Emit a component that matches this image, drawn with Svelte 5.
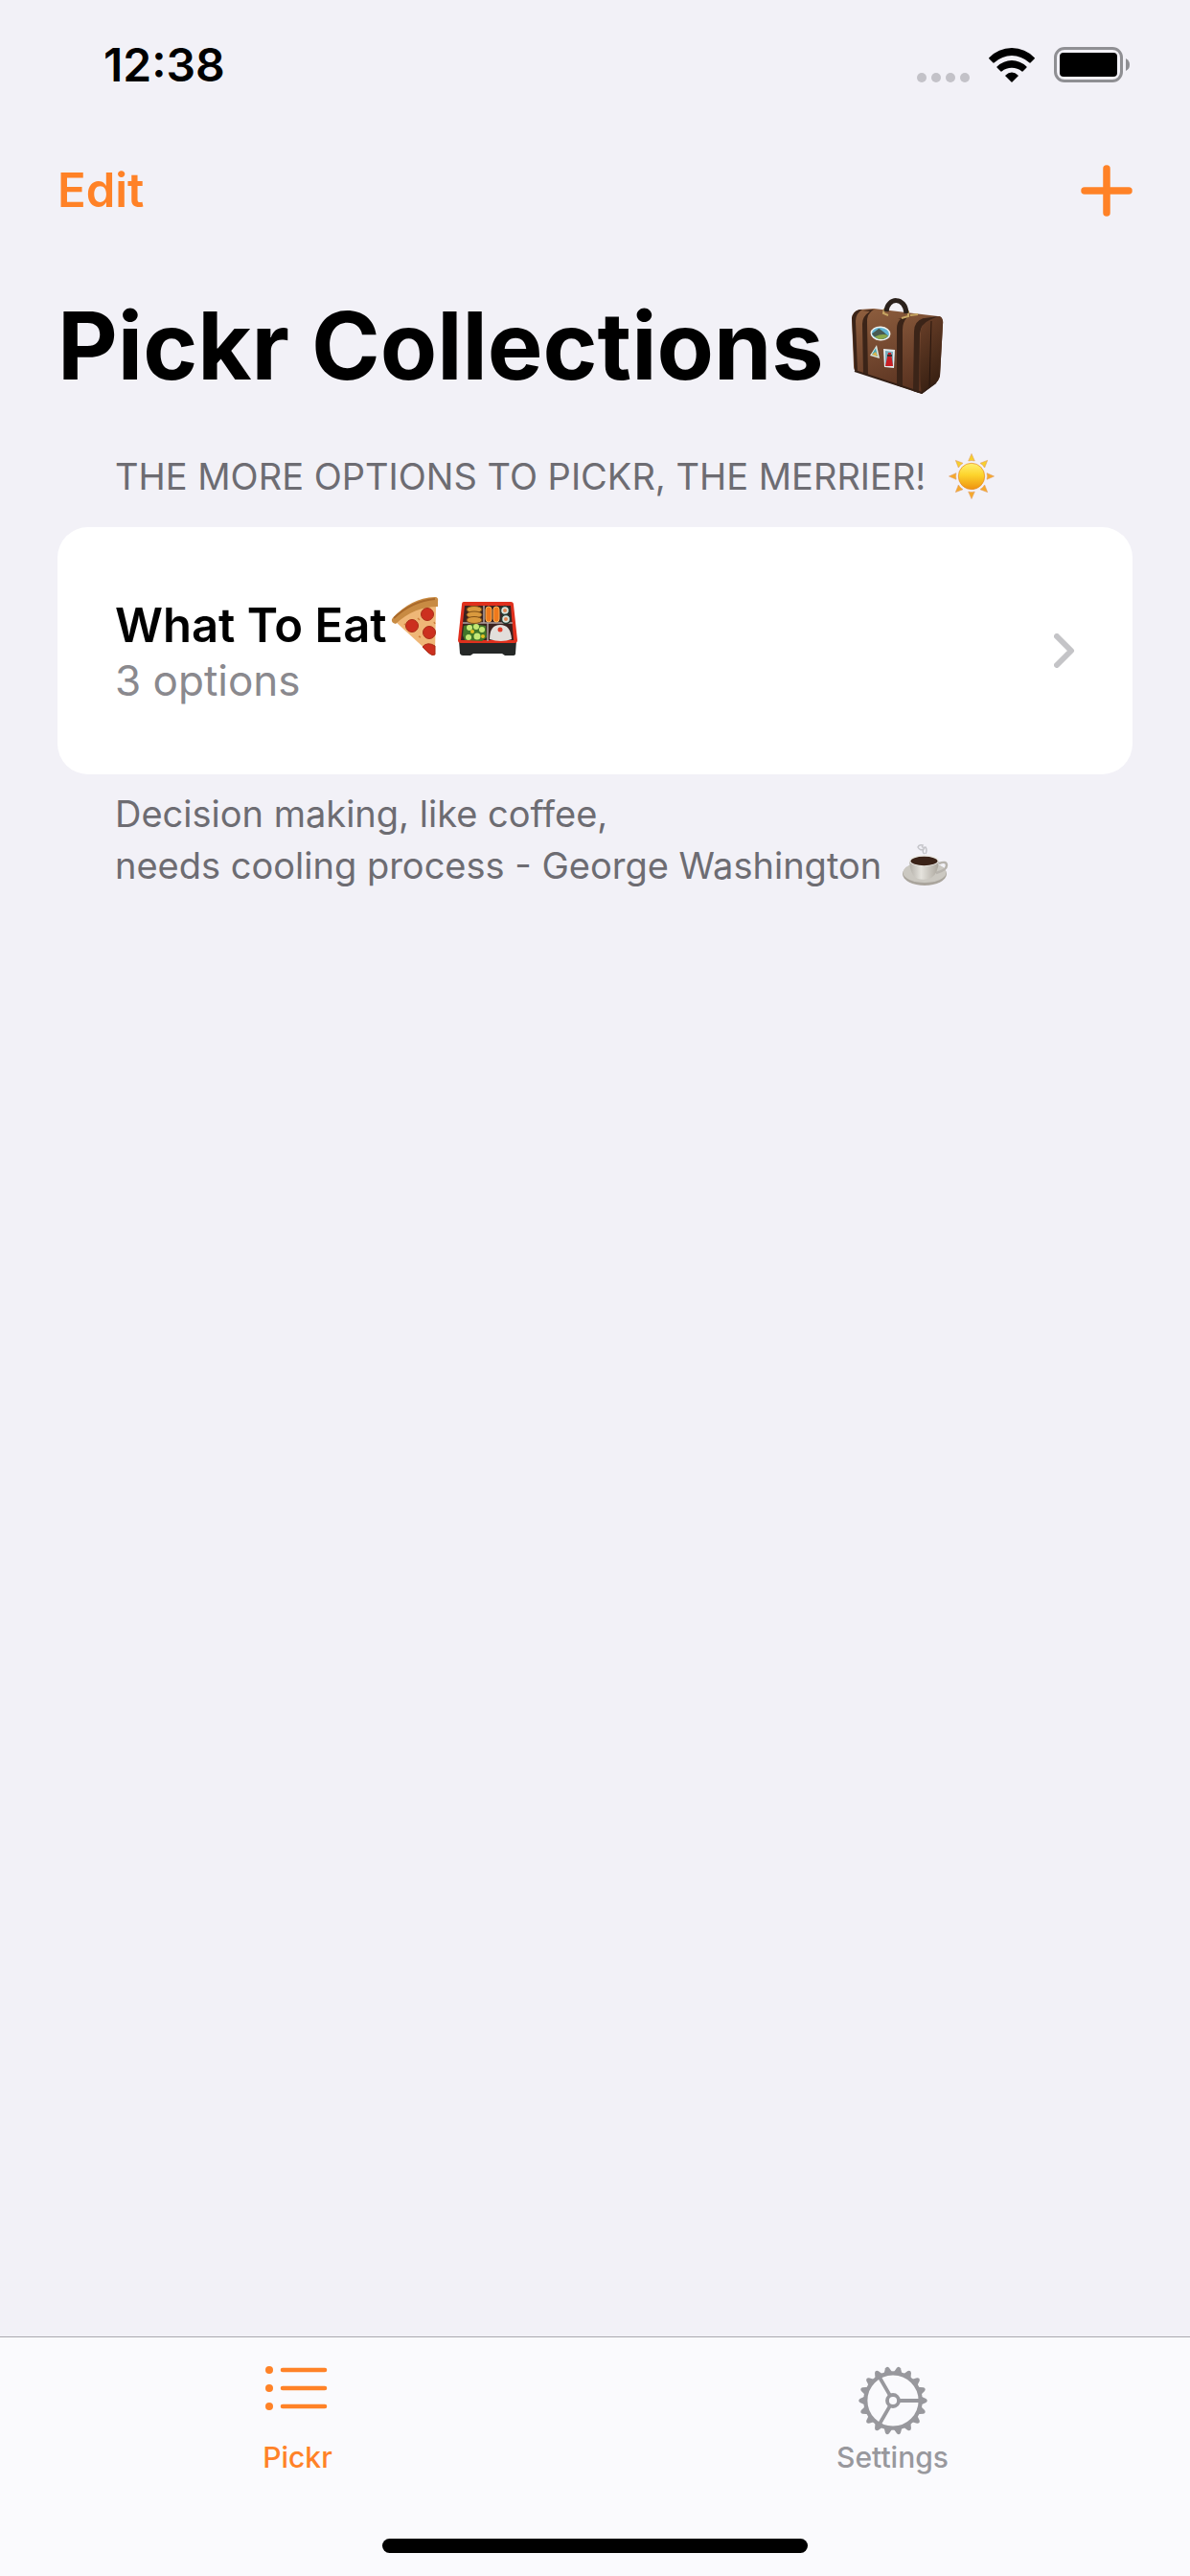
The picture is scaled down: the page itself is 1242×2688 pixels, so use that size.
<script>
  const teeth = Array.from({ length: 18 }, (_, i) => i * 20);
  const rays = Array.from({ length: 8 }, (_, i) => i * 45);
</script>

<div class="screen">
  <div class="status">
    <time>12:38</time>
    <div class="indicators">
      <svg class="dots" viewBox="0 0 55 10" aria-hidden="true">
        <g fill="#c3c2c8">
          <circle cx="5" cy="5" r="5" /><circle cx="20" cy="5" r="5" /><circle cx="35" cy="5" r="5" /><circle cx="50" cy="5" r="5" />
        </g>
      </svg>
      <svg class="wifi" viewBox="0 0 48 36" aria-hidden="true">
        <path d="M0 10.5Q10 0 24 0T48 10.5Q48 11 47.500 11.500L43.500 15.500Q43 15.800 42.500 15.500Q34 8 24 8T5.500 15.500Q5 15.800 4.500 15.500L.5 11.500Q0 11 0 10.500Z" />
        <path d="M8.500 19.500Q15.500 13 24 13T39.500 19.500Q39.800 20 39.500 20.500L35.500 24.500Q35 24.800 34.500 24.500Q30 20.800 24 20.800T13.500 24.500Q13 24.800 12.500 24.500L8.500 20.500Q8.200 20 8.500 19.500Z" />
        <path d="M17.500 28.500Q20.500 25.500 24 25.500T30.500 28.500Q31 29 30.500 29.500L24.500 35.500Q24 36 23.500 35.500L17.500 29.500Q17 29 17.500 28.500Z" />
      </svg>
      <svg class="battery" viewBox="0 0 79 37" aria-hidden="true">
        <rect x="1.500" y="1.500" width="69" height="34" rx="9.500" fill="none" stroke="#8f8f93" stroke-width="3" />
        <rect x="6" y="6" width="60" height="25" rx="4" />
        <path d="M75 12Q79 14 79 18.500T75 25Z" fill="#8f8f93" />
      </svg>
    </div>
  </div>

  <nav class="toolbar" aria-label="Actions">
    <button class="edit">Edit</button>
    <button class="add" aria-label="Add collection">
      <svg viewBox="0 0 54 54"><path d="M27 4V50M4 27H50" stroke="#ff8227" stroke-width="7.500" stroke-linecap="round" /></svg>
    </button>
  </nav>

  <main>
    <h1>
      <span>Pickr Collections</span>
      <svg class="case" viewBox="0 0 98 102" role="img" aria-label="Luggage">
        <defs>
          <linearGradient id="leather" x1="0" y1="0" x2=".4" y2="1">
            <stop offset="0" stop-color="#90603f" /><stop offset=".5" stop-color="#764a31" /><stop offset="1" stop-color="#5b3421" />
          </linearGradient>
          <linearGradient id="side" x1="0" y1="0" x2=".3" y2="1">
            <stop offset="0" stop-color="#6b4029" /><stop offset="1" stop-color="#382012" />
          </linearGradient>
        </defs>
        <path d="M1 22Q2 15 9 13L24 12 91 20Q97 22 96 29L93 82Q92 87 88 90L74 101 5 77Q3 76 3 72Z" fill="url(#leather)" />
        <path d="M74 101Q71 88 73 35Q75 24 88 20L93 20Q97 22 96 29L93 82Q92 87 88 90Z" fill="url(#side)" />
        <path d="M84 25L82 94" stroke="#28160e" stroke-width="1" />
        <path d="M12 14L24 13Q16 17 17 28L18 82 13 80 12 28Q12 20 20 15M49 23L59 21Q54 26 54 34L54 94 48 92 48 33Q48 26 52 23" fill="#3b2418" />
        <path d="M1 22Q2 15 9 13L12 13Q5 17 5 25L7 77 4 76Z M70 23L91 20 82 24Q73 28 72 38L71 100 65 98 66 36Q66 25 76 22Z" fill="#3b2418" />
        <path d="M4 77L74 100 89 89" fill="none" stroke="#342016" stroke-width="2" />
        <path d="M35 12L34 17 39 19M60 14V20L53 22M62 19L70 18" fill="none" stroke="#c7a663" stroke-width="2" />
        <path d="M37 15C38 0 57 -1 58 17" fill="none" stroke="#2b211c" stroke-width="5" />
        <g transform="rotate(4 31 38)">
          <ellipse cx="31" cy="38" rx="10.500" ry="7.500" fill="#eef3ef" />
          <ellipse cx="31" cy="38" rx="9" ry="6" fill="#61b5d5" />
          <path d="M22 39L29 33 34 36 39 40Q36 44 31 44Q25 43 22 39Z" fill="#485b51" /><path d="M25 42Q34 37 39 40Q36 44 30 44Z" fill="#8aa84c" />
        </g>
        <path d="M27 50L30 64 20 61Z" fill="#dfe8e2" /><path d="M26 53L28 62 22 60Z" fill="#46a7b4" /><path d="M22 60L26 57 28 62Z" fill="#dcb34e" />
        <path d="M34 54L46 55 45 74 35 73Z" fill="#e4ebed" /><path d="M36 56L44 57 44 72 36 71Z" fill="#79aebe" /><path d="M39 58H42L44 72H36Z" fill="#c91f26" /><path d="M38 61H43" stroke="#3e3032" stroke-width="2" />
      </svg>
    </h1>

    <section>
      <h2>
        <span>THE MORE OPTIONS TO PICKR, THE MERRIER!</span>
        <svg class="sun" viewBox="-24 -24 48 48" role="img" aria-label="Sun">
          <defs>
            <linearGradient id="sunFill" x1="0" y1="0" x2="0" y2="1"><stop offset="0" stop-color="#fff071" /><stop offset=".45" stop-color="#fdd42c" /><stop offset="1" stop-color="#ee9210" /></linearGradient>
          </defs>
          {#each rays as angle}
            <path d="M0 -23.500L3.300 -16Q0 -17 -3.300 -16Z" fill={angle > 60 && angle < 300 ? '#f6a92a' : '#f7cf2c'} stroke="#e1a067" stroke-width=".6" transform="rotate({angle})" />
          {/each}
          <circle r="13.700" fill="url(#sunFill)" stroke="#e68b25" stroke-width=".7" />
        </svg>
      </h2>

      <a class="card" href="#what-to-eat">
        <span class="copy">
          <span class="name">
            <span>What To Eat</span>
            <svg class="pizza" viewBox="0 0 50 61" role="img" aria-label="Pizza">
              <path d="M4 25Q22 10 47 9L46 60Q44 62 40 58Z" fill="#efb777" />
              <path d="M1 23Q20 1 46 0Q50 0 49 5V10Q24 10 5 28Q0 27 1 23Z" fill="#c88b43" />
              <path d="M3 22Q22 4 46 2" fill="none" stroke="#a9692a" stroke-width="2" />
              <g fill="#cc301f" stroke="#a92e18" stroke-width="1"><circle cx="38" cy="18" r="6.500" /><circle cx="22" cy="30" r="6.500" /><circle cx="40" cy="37" r="6.500" /><path d="M33 52Q38 46 46 51L46 60Q43 62 39 58Z" /></g>
              <path d="M28 22L30 24M29 41L31 42M14 28L15 29M45 26L46 28" stroke="#cf7f3c" stroke-width="1.500" />
            </svg>
            <svg class="bento" viewBox="0 0 62 56" role="img" aria-label="Bento box">
              <path d="M1 40H61L60 54Q60 56 57 56H49L46 54H16L13 56H5Q3 56 2 54Z" fill="#252827" />
              <path d="M6 0H55Q58 0 58 3L62 40Q62 43 59 43H3Q0 43 0 40L4 3Q4 0 6 0Z" fill="#df301d" />
              <path d="M7 4H55L58 40H3Z" fill="#3a211f" />
              <path d="M27 4V22M5 22H57M31 22V41" stroke="#b2a3a3" stroke-width="1.500" />
              <g fill="#d99a3e" stroke="#815016" stroke-width="1"><ellipse cx="17" cy="8" rx="8" ry="3.500" /><ellipse cx="17" cy="13.500" rx="8" ry="3.500" /><ellipse cx="17" cy="19" rx="8" ry="3.500" /></g>
              <g fill="#ef791c" stroke="#fbb358" stroke-width="1"><rect x="29" y="5" width="6" height="16" rx="3" /><rect x="37" y="5" width="6" height="16" rx="3" /></g>
              <g fill="#dbe4da" stroke="#263c34" stroke-width="1.500"><circle cx="49" cy="9" r="4.500" /><circle cx="50" cy="18" r="4.500" /></g>
              <circle cx="49" cy="9" r="2" fill="#e18651" /><circle cx="50" cy="18" r="2" fill="#e18651" />
              <path d="M6 25L16 23 29 25 30 37 25 41 7 40 5 35Z" fill="#42762a" />
              <g fill="#c5e875"><circle cx="12" cy="27" r="3" /><circle cx="19" cy="26" r="3" /><circle cx="25" cy="29" r="3" /><circle cx="11" cy="37" r="3" /><circle cx="20" cy="36" r="3.500" /></g>
              <g fill="#e6bf22"><circle cx="15" cy="31" r="2" /><circle cx="26" cy="36" r="2" /></g>
              <path d="M33 39Q33 24 44 24T56 39Q45 43 33 39Z" fill="#e2dedb" /><circle cx="44" cy="29" r="2.500" fill="#e23c29" />
            </svg>
          </span>
          <span class="count">3 options</span>
        </span>
        <svg class="chevron" viewBox="0 0 22 36" aria-hidden="true"><path d="M3 3L18 18 3 33" /></svg>
      </a>

      <p>
        Decision making, like coffee,<br />
        <span class="quote">
          <span>needs cooling process - George Washington</span>
          <svg class="coffee" viewBox="0 0 48 44" role="img" aria-label="Coffee">
            <defs><linearGradient id="china"><stop offset="0" stop-color="#b4b0a9" /><stop offset=".4" stop-color="#e5e3dd" /><stop offset="1" stop-color="#aaa59c" /></linearGradient></defs>
            <ellipse cx="23" cy="31" rx="23" ry="12" fill="#aaa59d" /><ellipse cx="23" cy="29.500" rx="22.500" ry="10.500" fill="#cbc8c1" />
            <path d="M38 20Q46 17 46 22T35 30" fill="none" stroke="#b7b3ad" stroke-width="2.500" />
            <path d="M7 17Q8 33 16 36Q23 38 30 35Q37 31 38 17Z" fill="url(#china)" />
            <ellipse cx="22.500" cy="17" rx="15.500" ry="6" fill="#eeece8" /><ellipse cx="22.500" cy="17.500" rx="14" ry="4.700" fill="#3b2318" />
            <path d="M23 10Q20 8 22 5Q18 7 16 3Q17 0 21 1Q19 4 24 3Q26 6 24 10" fill="none" stroke="#c5c5ca" stroke-width="1.500" />
          </svg>
        </span>
      </p>
    </section>
  </main>

  <footer>
    <nav class="tabs" aria-label="Main">
      <a class="tab active" href="#pickr">
        <svg class="list" viewBox="0 0 68 72" aria-hidden="true">
          <g fill="#ff8227"><circle cx="4" cy="4" r="4" /><circle cx="4" cy="23" r="4" /><circle cx="4" cy="42" r="4" /></g>
          <path d="M18 4H62M18 23H62M18 42H62" stroke="#ff8227" stroke-width="4.600" stroke-linecap="round" />
        </svg>
        <span>Pickr</span>
      </a>
      <a class="tab" href="#settings">
        <svg class="gear" viewBox="-36 -36 72 72" aria-hidden="true">
          {#each teeth as angle}
            <path d="M28 -5L34.500 -2Q37 0 34.500 2L28 5Z" fill="#98989d" transform="rotate({angle})" />
          {/each}
          <g fill="none" stroke="#98989d"><circle r="28.700" stroke-width="4.200" /><circle r="6" stroke-width="3.800" /><path d="M7 0H28M-3.500 -6.100L-14 -24.200M-3.500 6.100L-14 24.200" stroke-width="3.800" /></g>
        </svg>
        <span>Settings</span>
      </a>
    </nav>
    <div class="home"></div>
  </footer>
</div>

<style>
  :global(body) { margin: 0; background: #f2f1f7; }
  .screen { min-height: 100vh; display: flex; flex-direction: column; background: #f2f1f7; color: #000; font-family: Inter, "Liberation Sans", sans-serif; }
  svg { display: block; flex: none; }
  a { color: inherit; text-decoration: none; }
  button { border: 0; padding: 0; background: none; font: inherit; cursor: pointer; }
  .status { display: flex; justify-content: space-between; align-items: center; height: 132px; padding: 3px 63px 0 108px; box-sizing: border-box; }
  time { font-size: 48px; line-height: 60px; font-weight: 600; }
  .indicators { display: flex; align-items: center; gap: 20px; }
  .dots { width: 55px; height: 10px; padding-top: 26px; }
  .wifi { width: 48px; height: 36px; }
  .battery { width: 79px; height: 37px; }
  .toolbar { display: flex; justify-content: space-between; align-items: center; height: 132px; padding: 2px 60px 0; box-sizing: border-box; }
  .edit { color: #ff8227; font-size: 49px; line-height: 60px; font-weight: 600; }
  .add svg { width: 54px; height: 54px; }
  main { flex: 1; padding: 0 60px; }
  h1 { display: flex; align-items: center; gap: 28px; height: 194px; margin: 0; font-size: 97px; line-height: 120px; font-weight: 700; }
  .case { width: 98px; height: 102px; }
  h2 { display: flex; align-items: center; gap: 24px; height: 80px; margin: 0; padding: 0 60px 12px; color: #6d6c72; font-size: 38px; line-height: 48px; font-weight: 400; }
  .sun { width: 48px; height: 48px; }
  h2 { height: 78px; padding-bottom: 14px; }
  .card { display: flex; align-items: center; justify-content: space-between; padding: 72px 60px; border-radius: 32px; background: #fff; }
  .copy, .name { display: flex; }
  .copy { flex-direction: column; }
  .name { align-items: center; font-size: 49px; line-height: 62px; font-weight: 600; }
  .pizza { width: 50px; height: 61px; margin-left: 4px; }
  .bento { width: 62px; height: 56px; margin-left: 20px; margin-top: 5px; }
  .count { color: #8a898e; font-size: 44px; line-height: 52px; }
  .chevron { width: 22px; height: 36px; }
  .chevron path { fill: none; stroke: #c4c4c7; stroke-width: 6; stroke-linecap: round; stroke-linejoin: round; }
  p { margin: 0; padding: 14px 60px; color: #6d6c72; font-size: 38px; line-height: 54px; }
  .quote { display: flex; align-items: center; gap: 22px; }
  .coffee { width: 48px; height: 44px; }
  footer { display: flex; flex-direction: column; align-items: center; border-top: 1px solid #aaa9ae; background: #fafafd; }
  .tabs { display: flex; width: 100%; }
  .tab { flex: 1; display: flex; flex-direction: column; align-items: center; padding: 30px 0 62px; color: #98989d; font-size: 30px; line-height: 46px; font-weight: 500; }
  .active { color: #ff8227; }
  .list { width: 68px; height: 72px; }
  .gear { width: 72px; height: 72px; }
  .home { width: 444px; height: 15px; margin-bottom: 24px; border-radius: 8px; background: #000; }
</style>
